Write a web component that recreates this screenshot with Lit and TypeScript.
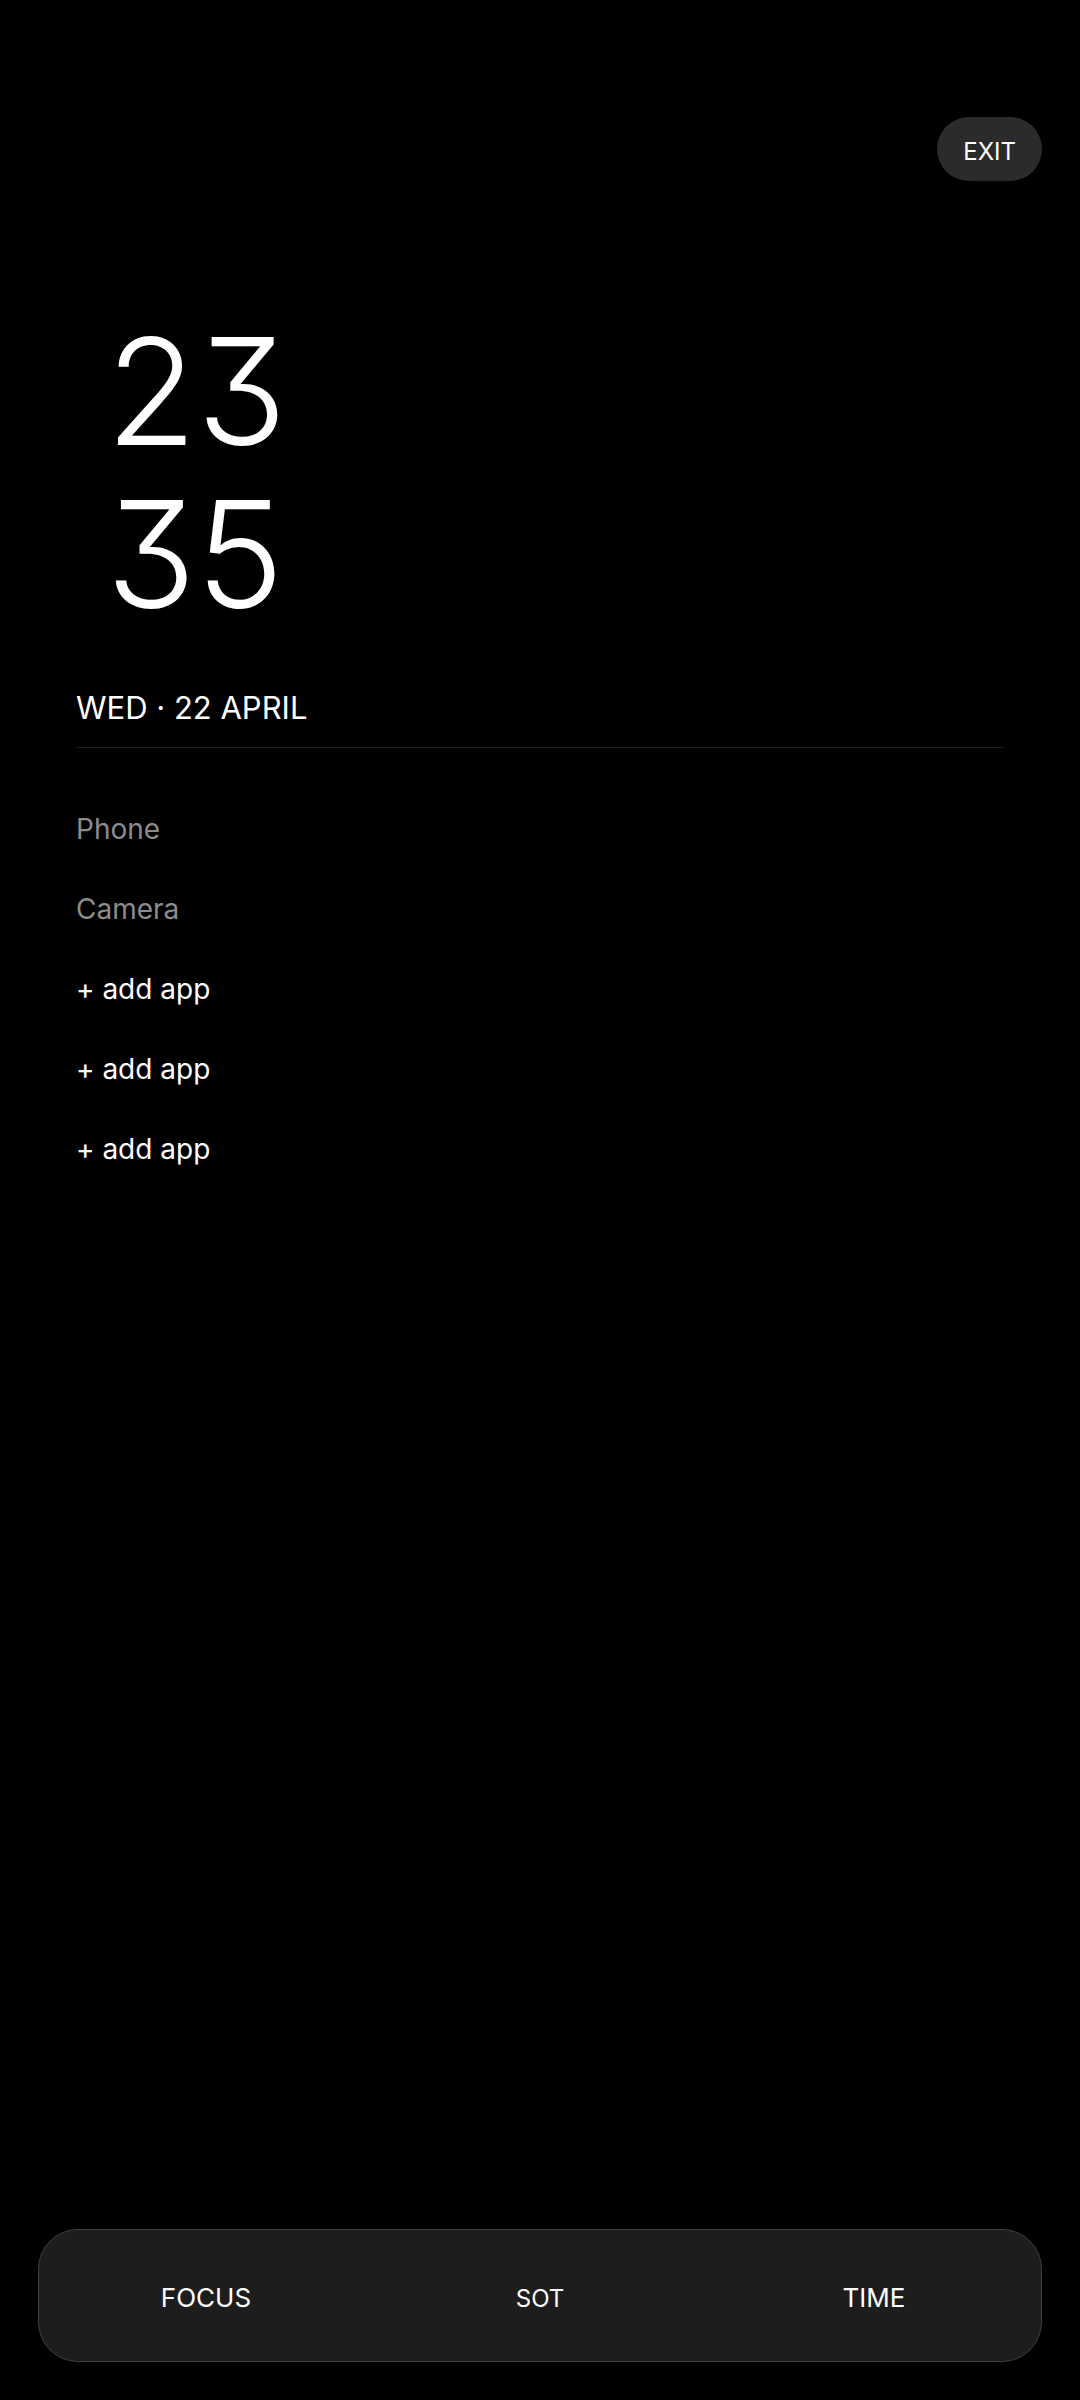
import { LitElement, css, html } from "lit";
import { customElement, property } from "lit/decorators.js";

interface AppSlot {
  label: string;
  empty?: boolean;
}

@customElement("launcher-clock")
export class LauncherClock extends LitElement {
  static styles = css`
    :host {
      display: block;
    }

    .time {
      display: flex;
      flex-direction: column;
      align-items: flex-start;
      padding-left: 30px;
      font-size: 148px;
      font-weight: 300;
      line-height: 163px;
      font-feature-settings: "cv09";
    }

    .date {
      margin-top: 50px;
      padding-bottom: 17px;
      border-bottom: 1px solid #1c1c1c;
      font-size: 31px;
      line-height: 44px;
    }
  `;

  @property() hours = "";
  @property() minutes = "";
  @property() date = "";

  render() {
    return html`
      <div class="time">
        <span>${this.hours}</span>
        <span>${this.minutes}</span>
      </div>
      <div class="date">${this.date}</div>
    `;
  }
}

@customElement("app-root")
export class AppRoot extends LitElement {
  static styles = css`
    :host {
      display: block;
      background: #000;
      color: #fff;
      font-family: Inter, "Open Sans", sans-serif;
    }

    .screen {
      box-sizing: border-box;
      min-height: 100vh;
      padding: 117px 38px 38px;
      display: flex;
      flex-direction: column;
    }

    button {
      margin: 0;
      padding: 0;
      border: none;
      background: none;
      color: inherit;
      font: inherit;
      cursor: pointer;
    }

    .exit {
      align-self: flex-end;
      padding: 6px 26px 0;
      border-radius: 32px;
      background: #2b2b2b;
      font-size: 24px;
      line-height: 58px;
    }

    .home {
      flex: 1;
      padding: 129px 38px 0;
    }

    .apps {
      list-style: none;
      margin: 0;
      padding: 41px 0 0;
    }

    .app {
      display: block;
      font-size: 28px;
      line-height: 80px;
      color: #8c8c8c;
    }

    .app.empty {
      color: #fff;
    }

    .dock {
      display: grid;
      grid-template-columns: repeat(3, 1fr);
      align-items: baseline;
      border: 1px solid #404040;
      border-radius: 40px;
      background: #1d1d1e;
    }

    .dock button {
      padding: 6px 0 0;
      font-size: 26px;
      line-height: 124px;
    }

    .dock .small {
      font-size: 24px;
    }
  `;

  private slots: AppSlot[] = [
    { label: "Phone" },
    { label: "Camera" },
    { label: "+ add app", empty: true },
    { label: "+ add app", empty: true },
    { label: "+ add app", empty: true },
  ];

  render() {
    return html`
      <div class="screen">
        <button class="exit">EXIT</button>
        <main class="home">
          <launcher-clock hours="23" minutes="35" date="WED · 22 APRIL"></launcher-clock>
          <ul class="apps">
            ${this.slots.map(
              (slot) => html`
                <li><button class="app ${slot.empty ? "empty" : ""}">${slot.label}</button></li>
              `,
            )}
          </ul>
        </main>
        <nav class="dock">
          <button>FOCUS</button>
          <button class="small">SOT</button>
          <button>TIME</button>
        </nav>
      </div>
    `;
  }
}

declare global {
  interface HTMLElementTagNameMap {
    "launcher-clock": LauncherClock;
    "app-root": AppRoot;
  }
}
